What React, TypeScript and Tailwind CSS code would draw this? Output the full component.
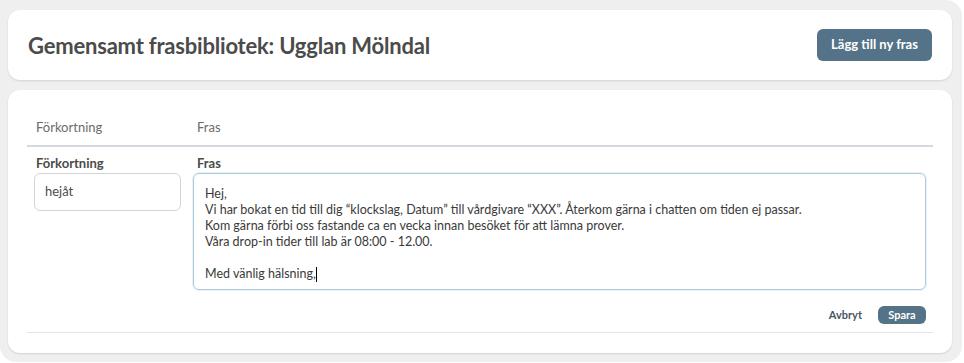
import React from "react"

const font = { fontFamily: "Lato, 'Open Sans', sans-serif" }

const lines = [
    "Hej,",
    "Vi har bokat en tid till dig “klockslag, Datum” till vårdgivare “XXX”. Återkom gärna i chatten om tiden ej passar.",
    "Kom gärna förbi oss fastande ca en vecka innan besöket för att lämna prover.",
    "Våra drop-in tider till lab är 08:00 - 12.00.",
    "",
]

const App = () => {
    return (
        <div className="bg-white w-[964px] h-[363px]" style={font}>
            <div className="w-[962px] h-[362px] bg-[#efefef] rounded-r-2xl rounded-bl-2xl pl-2 pr-2.5 pt-2.5 flex flex-col gap-2.5">
                <div className="bg-white rounded-xl h-[70px] px-5 flex items-center justify-between shadow-[0_1px_2px_rgba(0,0,0,0.12)]">
                    <h1 className="text-[22px] font-bold text-[#4b4b4b] tracking-[-0.2px]">Gemensamt frasbibliotek: Ugglan Mölndal</h1>
                    <button className="bg-[#547389] text-white text-[13px] font-bold rounded-md w-[115px] h-8">Lägg till ny fras</button>
                </div>

                <div className="bg-white rounded-xl h-[263px] px-[19px] pt-[28px] shadow-[0_1px_2px_rgba(0,0,0,0.12)]">
                    <div className="flex h-[29px] border-b-2 border-[#d5d8de] text-[13px] text-[#6b6b6b]">
                        <div className="w-[170px] pl-[9px]">Förkortning</div>
                        <div>Fras</div>
                    </div>

                    <div className="flex pt-[7px] pb-[8px] border-b border-[#e6e6e6]">
                        <div className="w-[170px] pl-[7px] pr-[16px]">
                            <div className="text-[13px] font-bold text-[#4b4b4b] pl-[2px] h-[19px]">Förkortning</div>
                            <div className="h-[38px] border border-[#d4d4d4] rounded-md px-[10px] flex items-center text-[13px] text-[#4b4b4b]">hejåt</div>
                        </div>
                        <div className="flex-1 pr-[7px]">
                            <div className="text-[13px] font-bold text-[#4b4b4b] h-[19px]">Fras</div>
                            <div className="-ml-1 h-[117px] border border-[#a9cbdc] rounded-md px-[11px] pt-[12px] text-[12.5px] leading-4 text-[#3a3a3a] shadow-[0_0_0_1px_rgba(169,203,220,0.25)]">
                                {lines.map((l, i) => (
                                    <div key={i} className="h-4">{l}</div>
                                ))}
                                <div className="h-4 flex items-center">
                                    Med vänlig hälsning,<span className="inline-block w-px h-[15px] bg-black" />
                                </div>
                            </div>
                            <div className="flex justify-end items-center gap-4 mt-[16px]">
                                <span className="text-[11px] font-bold text-[#4b5563]">Avbryt</span>
                                <button className="bg-[#547389] text-white text-[11px] font-bold rounded-md w-12 h-[18px]">Spara</button>
                            </div>
                        </div>
                    </div>
                </div>
            </div>
        </div>
    )
}

export default App
